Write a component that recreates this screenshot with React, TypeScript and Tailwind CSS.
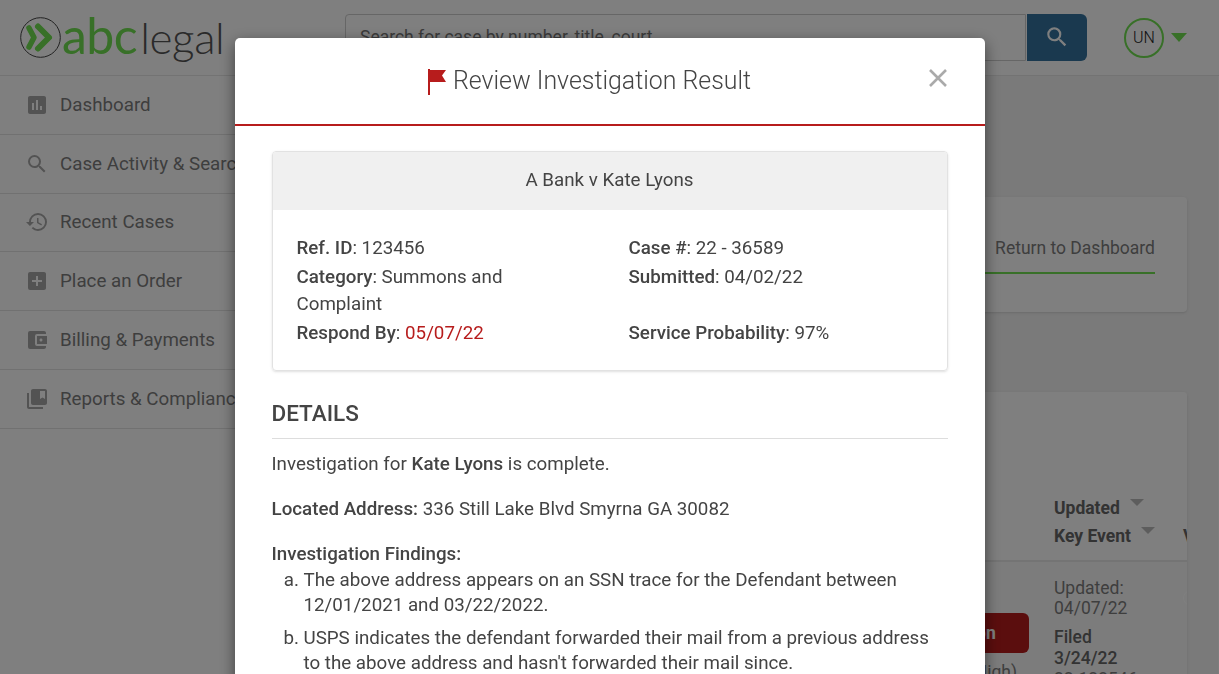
import { MdAssessment, MdSearch, MdHistory, MdAddBox, MdAccountBalanceWallet, MdCollectionsBookmark } from 'react-icons/md';

const navItems = [
  { label: 'Dashboard', icon: MdAssessment },
  { label: 'Case Activity & Search', icon: MdSearch },
  { label: 'Recent Cases', icon: MdHistory },
  { label: 'Place an Order', icon: MdAddBox },
  { label: 'Billing & Payments', icon: MdAccountBalanceWallet },
  { label: 'Reports & Compliance', icon: MdCollectionsBookmark },
];

function Logo() {
  return (
    <div className="flex items-center">
      <svg width="41" height="41" viewBox="0 0 41 41" className="shrink-0">
        <circle cx="20.5" cy="20.5" r="19.8" fill="none" stroke="#444" strokeWidth="1" />
        <path d="M9 11 L14 20.5 L9 30" fill="none" stroke="#70e050" strokeWidth="5.5" strokeLinecap="round" strokeLinejoin="round" />
        <path d="M18 9.5 L29 20.5 L18 31.5" fill="none" stroke="#70e050" strokeWidth="6" strokeLinecap="round" strokeLinejoin="round" />
      </svg>
      <span className="text-[50px] leading-none -mt-[6px] font-['Lato'] ml-[1px] whitespace-nowrap">
        <span className="text-[#70e050] font-normal tracking-[-0.5px]">abc</span>
        <span className="text-[#555] font-light text-[44px] tracking-[-0.4px] ml-[3px]">legal</span>
      </span>
    </div>
  );
}

function Header() {
  return (
    <header className="h-[76px] shrink-0 bg-white border-b border-[#e6e6e6] flex items-center pl-[20px] pr-[32px]">
      <div className="w-[325px] shrink-0">
        <Logo />
      </div>
      <div className="flex w-[742px] h-[47px] shrink-0 -mt-[1px]">
        <input
          className="flex-1 border border-[#ccc] rounded-l pl-[14px] text-[17.5px] bg-white outline-none placeholder:text-[#777]"
          placeholder="Search for case by number, title, court"
          readOnly
        />
        <button className="w-[60px] ml-[1px] bg-[#34739f] rounded-r-[6px] flex items-center justify-center text-white">
          <MdSearch size={26} />
        </button>
      </div>
      <div className="ml-auto flex items-center gap-[7px]">
        <div className="w-[40px] h-[40px] rounded-full border-2 border-[#70e050] flex items-center justify-center text-[16px] font-light text-[#222]">
          UN
        </div>
        <span className="w-0 h-0 border-x-[8px] border-x-transparent border-t-[9px] border-t-[#70e050]" />
      </div>
    </header>
  );
}

function Sidebar() {
  return (
    <aside className="w-[240px] shrink-0 bg-white">
      {navItems.map(({ label, icon: Icon }) => (
        <div key={label} className="h-[58.8px] border-b border-[#e3e3e3] flex items-center pl-[25px] gap-[11px] text-[18.75px] text-[#7d7d7d] whitespace-nowrap overflow-hidden">
          <Icon size={24} className="shrink-0 text-[#a6a6a6]" />
          <span>{label}</span>
        </div>
      ))}
    </aside>
  );
}

function Background() {
  return (
    <main className="flex-1 min-w-0 bg-[#f4f4f4] pt-[121px] pl-[20px] pr-[31px] overflow-hidden border-r border-[#fbfbfb]">
      <div className="h-[115px] bg-white rounded shadow-sm flex justify-end pr-[32px] pt-[39px]">
        <div className="w-[170px] h-[38px] border-b-2 border-[#70e050] text-right text-[17.5px] text-[#7d7d7d] leading-[24px]">
          Return to Dashboard
        </div>
      </div>
      <div className="mt-[80px] rounded shadow-sm overflow-hidden h-[400px] bg-[#f8f8f8]">
        <div className="h-[170px] bg-white border-b-2 border-[#e8e8e8] flex justify-end items-end pb-[10px] font-bold text-[17.5px] text-[#666] leading-[28px]">
          <div className="w-[133px]">
            <div className="flex items-start gap-[10px]">
              Updated
              <span className="mt-[5px] w-0 h-0 border-x-[7px] border-x-transparent border-t-[7px] border-t-[#bbb]" />
            </div>
            <div className="flex items-start whitespace-nowrap">
              Key Event
              <span className="mt-[5px] ml-[10px] mr-[28px] w-0 h-0 shrink-0 border-x-[7px] border-x-transparent border-t-[7px] border-t-[#bbb]" />
              Vendor
            </div>
          </div>
        </div>
        <div className="flex justify-end relative">
          <div className="mt-[51px] mr-[24px] text-right text-[17.5px] leading-[24px]">
            <div className="w-[60px] h-[40px] bg-[#b71c1c] rounded-md text-white font-bold leading-[40px] pr-[33px]">on</div>
            <div className="mr-[13px] mt-[7px] whitespace-nowrap text-[#7d7d7d]">(High)</div>
          </div>
          <div className="w-[133px] pt-[16px] text-[17.5px] leading-[20px] text-[#7d7d7d]">
            <div>Updated:</div>
            <div>04/07/22</div>
            <div className="mt-[9px] leading-[21px] text-[#666] font-medium">Filed</div>
            <div className="leading-[21px] text-[#666] font-medium">3/24/22</div>
            <div>22-123546</div>
          </div>
          <span className="absolute -right-[12px] top-[28px] w-[16px] h-[16px] rounded-full border border-[#fff] bg-[#f8f8f8]" />
        </div>
      </div>
    </main>
  );
}

function Field({ label, children }: { label: string; children: React.ReactNode }) {
  return (
    <div className="pr-[60px]">
      <span className="font-medium">{label}</span>: {children}
    </div>
  );
}

function ReviewModal() {
  return (
    <div className="fixed inset-0 bg-black/50 overflow-hidden flex justify-center pt-[38px] items-start">
      <div className="w-[750px] shrink-0 bg-white rounded-[5px] shadow-[0_5px_15px_rgba(0,0,0,0.5)] text-[18.75px] leading-[27px] text-[#444]">
        <div className="h-[88px] border-b-2 border-[#b71c1c] flex items-start pl-[17px] pr-[37px]">
          <div className="flex-1 h-[86px] flex items-center justify-center gap-[7px] text-[24.9px] font-light text-[#444]">
            <svg width="18" height="26" viewBox="0 0 18 26" className="mt-[1px]">
              <path d="M0 0 H2 V1 H18 L14 6.5 L18 13 H2 V26 H0 Z" fill="#b71c1c" />
            </svg>
            <span className="-mt-[1px]">Review Investigation Result</span>
          </div>
          <button className="w-[20px] h-[20px] mt-[30px] text-[#aaa]">
            <svg viewBox="0 0 20 20" width="20" height="20">
              <path d="M2 2 L18 18 M18 2 L2 18" stroke="currentColor" strokeWidth="2.6" />
            </svg>
          </button>
        </div>
        <div className="pl-[38px] pr-[37px] pt-[25px] pb-[30px]">
          <div className="border border-[#e2e2e2] rounded shadow-sm overflow-hidden -ml-[1px]">
            <div className="h-[58px] pb-[1px] bg-[#f0f0f0] flex items-center justify-center">A Bank v Kate Lyons</div>
            <div className="grid grid-cols-[332px_1fr] gap-y-[2px] pl-[24px] pt-[25px] pb-[23px]">
              <Field label="Ref. ID">123456</Field>
              <Field label="Case #">22 - 36589</Field>
              <Field label="Category">Summons and Complaint</Field>
              <Field label="Submitted">04/02/22</Field>
              <Field label="Respond By"><span className="text-[#b71c1c]">05/07/22</span></Field>
              <Field label="Service Probability">97%</Field>
            </div>
          </div>
          <h2 className="mt-[26px] -ml-[1px] text-[22.5px] font-medium leading-[33px] pb-[8px] border-b border-[#ddd]">DETAILS</h2>
          <div className="-ml-[1px]">
            <p className="mt-[12px]">Investigation for <span className="font-medium">Kate Lyons</span> is complete.</p>
            <p className="mt-[18px]"><span className="font-medium">Located Address:</span> 336 Still Lake Blvd Smyrna GA 30082</p>
            <p className="mt-[18px] font-medium">Investigation Findings:</p>
          </div>
          <ol className="list-[lower-alpha] pl-[31px] leading-[25px] space-y-[8px]">
            <li>The above address appears on an SSN trace for the Defendant between 12/01/2021 and 03/22/2022.</li>
            <li>USPS indicates the defendant forwarded their mail from a previous address to the above address and hasn't forwarded their mail since.</li>
          </ol>
        </div>
      </div>
    </div>
  );
}

export default function App() {
  return (
    <div className="h-screen overflow-hidden flex flex-col font-['Roboto',sans-serif] bg-white">
      <Header />
      <div className="flex flex-1 min-h-0">
        <Sidebar />
        <Background />
      </div>
      <ReviewModal />
    </div>
  );
}
